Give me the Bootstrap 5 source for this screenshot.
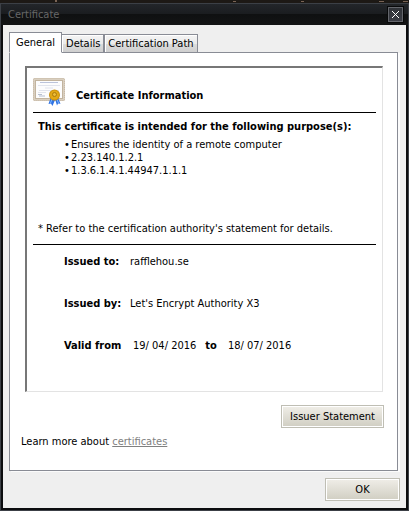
<!DOCTYPE html>
<html lang="en">
<head>
<meta charset="utf-8">
<meta name="viewport" content="width=device-width, initial-scale=1">
<title>Certificate</title>
<link href="https://cdn.jsdelivr.net/npm/bootstrap@5.3.0/dist/css/bootstrap.min.css" rel="stylesheet">
<style>
body { font: 11px/13px "DejaVu Sans Condensed", "Noto Sans", sans-serif; color: #000; background: #1d1915; }
.desktop-strip { height: 3px; }
.desktop-strip svg { display: block; width: 100%; height: 3px; }
.window-frame { background: #0c0d0f; border: 1px solid #3c4046; }
.title-bar { height: 21px; padding: 0 5px 0 7px; color: #666; background: linear-gradient(#23262a 0, #1a1c1f 50%, #0f1011 50%, #131415 100%); }
.close-btn { width: 15px; height: 15px; background: linear-gradient(#303338, #3a3c44); border: 1px solid #64666c; outline: 1px solid #08090a; }
.client-area { background: #efefef; margin: 0 2px 2px; padding: 7px 6px; }
.cert-tabs { border: 0; position: relative; z-index: 1; margin-bottom: -1px; }
.cert-tabs .nav-link { height: 19px; padding: 0 3px; color: #000; border: 1px solid #898c95; border-radius: 0; background: linear-gradient(#f4f4f4 0, #ebebeb 50%, #dddddd 50%, #cfcfcf 100%); box-shadow: inset 1px 1px #fff; margin: 0; line-height: 18px; }
.cert-tabs .nav-item:nth-child(2) .nav-link { border-left: 0; padding-left: 4px; }
.cert-tabs .nav-link.active { height: 21px; padding: 0 6px; color: #000; background: #fff; border-color: #898c95; border-bottom-color: #fff; }
.tab-panel { background: #fff; border: 1px solid #898c95; box-shadow: 2px 1px #fbfbfb; margin-right: 2px; padding: 13px 13px 22px 15px; }
.cert-sheet { border: 2px solid; border-color: #777 #e3e3e3 #e3e3e3 #777; border-right-width: 1px; border-bottom-width: 1px; padding: 10px 6px 0; margin-right: 1px; }
.cert-sheet h1, .cert-sheet h2, .cert-sheet dt { font-size: 11px; line-height: 13px; font-weight: 700; margin: 0; }
.cert-head { height: 35px; gap: 11px; border-bottom: 1px solid #000; }
.cert-head h1 { padding-top: 11px; }
.purpose { padding: 7px 5px 0; height: 132px; border-bottom: 1px solid #000; }
.purpose ul { list-style: none; margin: 5px 0 0; padding-left: 26px; }
.purpose li::before { content: "•"; display: inline-block; width: 7px; }
.purpose p { margin-bottom: 9px; }
.facts { padding: 10px 0 0 31px; margin: 0; }
.facts > div { height: 42px; }
.facts dt { width: 66px; }
.facts dd { margin: 0; }
.facts .date { padding: 0 9px 0 3px; }
.win-btn { height: 23px; padding: 0 8px; font-size: 11px; line-height: 13px; color: #000; border: 1px solid #bfbeb4; border-radius: 0; background: linear-gradient(#f0eee8, #d0cec2); box-shadow: inset 0 0 0 1px #fff; }
.win-btn:hover { color: #000; border-color: #999; }
.issuer-btn { margin-top: 13px; }
.ok-btn { width: 75px; margin-top: 7px; }
.learn { padding-top: 7px; margin-left: -4px; }
.learn a { color: #808080; }
</style>
<script src="https://cdn.jsdelivr.net/npm/bootstrap@5.3.0/dist/js/bootstrap.bundle.min.js"></script>
</head>
<body class="d-flex flex-column min-vh-100">
<div class="desktop-strip" aria-hidden="true">
<svg viewBox="0 0 409 3" preserveAspectRatio="none"><path d="M55 0h2v2h-2zM233 1h3v1h-3zM301 1h3v1h-3zM379 1h5v1h-5zM403 1h5v1h-5z" fill="#7a6455"/></svg>
</div>
<main class="window-frame d-flex flex-column flex-grow-1">
  <header class="title-bar d-flex align-items-center justify-content-between">
    <span>Certificate</span>
    <button type="button" class="close-btn d-flex align-items-center justify-content-center p-0" aria-label="Close">
      <svg width="7" height="7" viewBox="0 0 7 7" shape-rendering="crispEdges"><path d="M0 0h1v1h1v1h1v1h1v-1h1v-1h1v-1h1v1h-1v1h-1v1h-1v1h1v1h1v1h1v1h-1v-1h-1v-1h-1v-1h-1v1h-1v1h-1v1h-1v-1h1v-1h1v-1h1v-1h-1v-1h-1v-1h-1z" fill="#fff"/></svg>
    </button>
  </header>
  <div class="client-area d-flex flex-column flex-grow-1">
    <ul class="nav nav-tabs cert-tabs align-items-end" role="tablist">
      <li class="nav-item" role="presentation"><button class="nav-link active" type="button" role="tab" aria-selected="true">General</button></li>
      <li class="nav-item" role="presentation"><button class="nav-link" type="button" role="tab" aria-selected="false">Details</button></li>
      <li class="nav-item" role="presentation"><button class="nav-link" type="button" role="tab" aria-selected="false">Certification Path</button></li>
    </ul>
    <section class="tab-panel d-flex flex-column flex-grow-1">
      <div class="cert-sheet flex-grow-1">
        <div class="cert-head d-flex">
          <svg class="flex-shrink-0" width="32" height="28" viewBox="0 0 32 28" aria-hidden="true">
            <rect width="32" height="23" rx="1.5" fill="#d9cfc0"/>
            <rect x=".5" y=".5" width="31" height="22" rx="1" fill="none" stroke="#c6b8a4" stroke-dasharray="1 1"/>
            <rect x="2.5" y="2.5" width="27" height="18" fill="#fcfcfd" stroke="#c2b49f"/>
            <path d="M7 4.5h18" stroke="#aab4d0" stroke-width=".8"/>
            <path d="M5 7.5h22M12 10h8M6 12.5h20M5 14.5h8" stroke="#d9dde8" stroke-width=".8"/>
            <path d="M5 16.5h4M6 18h6" stroke="#a3aec4" stroke-width=".8"/>
            <path d="M17.5 20l-2 6 2.500-.5 1.500 2.500 2.500-6zM22 21l2 6.500 1-2 2.500 .2-2.500-6z" fill="#2f73e4"/>
            <path d="M19 21l-1.500 4M24 21.500l1.500 3.500" stroke="#82baff"/>
            <circle cx="21.500" cy="17" r="5.500" fill="#c98f10"/>
            <circle cx="21.500" cy="17" r="4.500" fill="#e2a916"/>
            <circle cx="21.500" cy="16.500" r="2" fill="#e9bb3c" stroke="#a97508" stroke-width=".9"/>
          </svg>
          <h1>Certificate Information</h1>
        </div>
        <div class="purpose d-flex flex-column">
          <h2>This certificate is intended for the following purpose(s):</h2>
          <ul>
            <li>Ensures the identity of a remote computer</li>
            <li>2.23.140.1.2.1</li>
            <li>1.3.6.1.4.1.44947.1.1.1</li>
          </ul>
          <p class="mt-auto">* Refer to the certification authority's statement for details.</p>
        </div>
        <dl class="facts">
          <div class="d-flex"><dt>Issued to:</dt><dd>rafflehou.se</dd></div>
          <div class="d-flex"><dt>Issued by:</dt><dd>Let's Encrypt Authority X3</dd></div>
          <div class="d-flex"><dt>Valid from</dt><dd><time class="date" datetime="2016-04-19">19/ 04/ 2016</time><b>to</b><time class="date ms-2" datetime="2016-07-18">18/ 07/ 2016</time></dd></div>
        </dl>
      </div>
      <button type="button" class="btn win-btn issuer-btn align-self-end">Issuer Statement</button>
      <p class="learn mb-0">Learn more about <a href="#">certificates</a></p>
    </section>
    <button type="button" class="btn win-btn ok-btn align-self-end">OK</button>
  </div>
</main>
</body>
</html>
